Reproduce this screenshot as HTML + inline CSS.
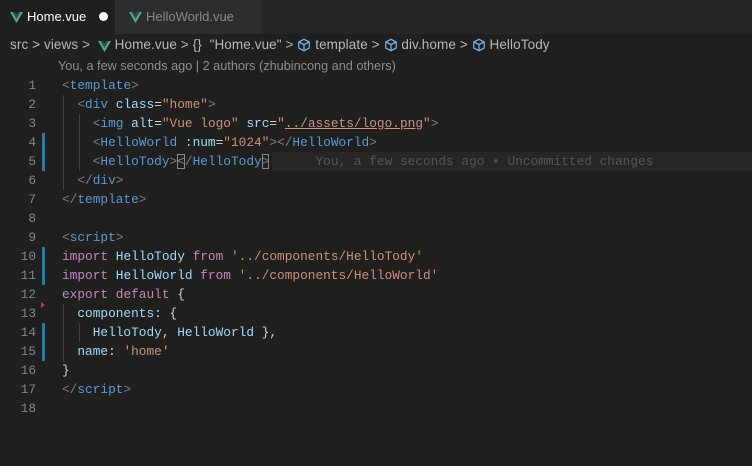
<!DOCTYPE html>
<html><head><meta charset="utf-8"><style>
body{margin:0;width:752px;height:466px;background:#1f1f1e;overflow:hidden;font-family:"Liberation Sans",sans-serif;position:relative}
.tabs{position:absolute;left:0;top:0;width:752px;height:34px;background:#252526}
.tab{position:absolute;top:0;height:34px;font-size:13px;line-height:34px}
.t1{left:0;width:115px;background:#1f1f1e;color:#fff}
.t2{left:115px;width:147px;background:#2d2d2d;color:#8a8a8a}
.t2 .v{margin-left:14px}
.v{display:inline-block;vertical-align:-2px;margin:0 4px 0 10px}
.bc{position:absolute;left:10px;top:36px;font-size:13.5px;letter-spacing:0.1px;color:#b8b8b8;line-height:18px;white-space:nowrap}
.bc svg{vertical-align:-3px}
.blame{position:absolute;left:58px;top:59px;font-size:12.7px;color:#8f8f8f}
.code{position:absolute;left:0;top:76px;font-family:"Liberation Mono",monospace;font-size:12.8px}
.ln{position:absolute;left:0;width:36px;text-align:right;color:#858585;height:19px;line-height:19px}
.l{position:absolute;left:62px;height:19px;line-height:19px;white-space:pre;color:#d4d4d4}
.g{position:absolute;left:42px;width:3px;height:19px;background:#1b81a8}
.b{color:#808080}.t{color:#569cd6}.a{color:#9cdcfe}.s{color:#ce9178}.k{color:#c586c0}.c{color:#9cdcfe}
.br{outline:1px solid #888;outline-offset:-1px}
.ghost{color:#555}
.guide{position:absolute;width:1px;background:#404040}
</style></head><body>
<div class="tabs">
<div class="tab t1"><svg class="v" width="13" height="11" viewBox="0 0 26 22"><path d="M0 0h5l8 14 8-14h5L13 22z" fill="#41b883"/><path d="M5 0h5l3 5 3-5h5l-8 14z" fill="#35495e"/></svg>Home.vue<span style="display:inline-block;width:9px;height:9px;border-radius:50%;background:#fff;margin-left:13px;vertical-align:0"></span></div>
<div class="tab t2"><svg class="v" width="13" height="11" viewBox="0 0 26 22"><path d="M0 0h5l8 14 8-14h5L13 22z" fill="#41b883"/><path d="M5 0h5l3 5 3-5h5l-8 14z" fill="#35495e"/></svg>HelloWorld.vue</div>
</div>
<div class="bc">src &gt; views &gt; &nbsp;<svg width="13" height="11" viewBox="0 0 26 22"><path d="M0 0h5l8 14 8-14h5L13 22z" fill="#41b883"/><path d="M5 0h5l3 5 3-5h5l-8 14z" fill="#35495e"/></svg> Home.vue &gt; {} &nbsp;"Home.vue" &gt; <svg width="14" height="14" viewBox="0 0 16 16"><path d="M8 1.5l6 3v7l-6 3-6-3v-7zM2 4.5l6 3 6-3M8 7.5v7" fill="none" stroke="#75beff" stroke-width="1.3"/></svg> template &gt; <svg width="14" height="14" viewBox="0 0 16 16"><path d="M8 1.5l6 3v7l-6 3-6-3v-7zM2 4.5l6 3 6-3M8 7.5v7" fill="none" stroke="#75beff" stroke-width="1.3"/></svg> div.home &gt; <svg width="14" height="14" viewBox="0 0 16 16"><path d="M8 1.5l6 3v7l-6 3-6-3v-7zM2 4.5l6 3 6-3M8 7.5v7" fill="none" stroke="#75beff" stroke-width="1.3"/></svg> HelloTody</div>
<div class="blame">You, a few seconds ago | 2 authors (zhubincong and others)</div>
<div class="code">
<div style="position:absolute;left:272px;top:76px;width:480px;height:19px;background:#262626"></div>
<div class="guide" style="left:63px;top:19px;height:95px"></div>
<div class="guide" style="left:79px;top:38px;height:57px"></div>
<div class="guide" style="left:63px;top:228px;height:57px"></div>
<div class="guide" style="left:79px;top:247px;height:19px"></div>
<div class="ln" style="top:0">1</div><div class="l" style="top:0"><span class="b">&lt;</span><span class="t">template</span><span class="b">&gt;</span></div>
<div class="ln" style="top:19px">2</div><div class="l" style="top:19px">  <span class="b">&lt;</span><span class="t">div</span> <span class="a">class</span>=<span class="s">"home"</span><span class="b">&gt;</span></div>
<div class="ln" style="top:38px">3</div><div class="l" style="top:38px">    <span class="b">&lt;</span><span class="t">img</span> <span class="a">alt</span>=<span class="s">"Vue logo"</span> <span class="a">src</span>=<span class="s">"<u>../assets/logo.png</u>"</span><span class="b">&gt;</span></div>
<div class="g" style="top:57px"></div><div class="ln" style="top:57px">4</div><div class="l" style="top:57px">    <span class="b">&lt;</span><span class="t">HelloWorld</span> <span class="a">:num</span>=<span class="s">"1024"</span><span class="b">&gt;&lt;/</span><span class="t">HelloWorld</span><span class="b">&gt;</span></div>
<div class="g" style="top:76px"></div><div class="ln" style="top:76px">5</div><div class="l" style="top:76px">    <span class="b">&lt;</span><span class="t">HelloTody</span><span class="b">&gt;</span><span class="b br">&lt;</span><span class="b">/</span><span class="t">HelloTody</span><span class="b br">&gt;</span>      <span class="ghost">You, a few seconds ago • Uncommitted changes</span></div>
<div class="ln" style="top:95px">6</div><div class="l" style="top:95px">  <span class="b">&lt;/</span><span class="t">div</span><span class="b">&gt;</span></div>
<div class="ln" style="top:114px">7</div><div class="l" style="top:114px"><span class="b">&lt;/</span><span class="t">template</span><span class="b">&gt;</span></div>
<div class="ln" style="top:133px">8</div>
<div class="ln" style="top:152px">9</div><div class="l" style="top:152px"><span class="b">&lt;</span><span class="t">script</span><span class="b">&gt;</span></div>
<div class="g" style="top:171px"></div><div class="ln" style="top:171px">10</div><div class="l" style="top:171px"><span class="k">import</span> <span class="c">HelloTody</span> <span class="k">from</span> <span class="s">'../components/HelloTody'</span></div>
<div class="g" style="top:190px"></div><div class="ln" style="top:190px">11</div><div class="l" style="top:190px"><span class="k">import</span> <span class="c">HelloWorld</span> <span class="k">from</span> <span class="s">'../components/HelloWorld'</span></div>
<div class="ln" style="top:209px">12</div><div class="l" style="top:209px"><span class="k">export</span> <span class="k">default</span> {</div>
<div style="position:absolute;left:41px;top:226px;width:0;height:0;border-left:4px solid #c33;border-top:3px solid transparent;border-bottom:3px solid transparent"></div>
<div class="ln" style="top:228px">13</div><div class="l" style="top:228px">  <span class="a">components</span>: {</div>
<div class="g" style="top:247px"></div><div class="ln" style="top:247px">14</div><div class="l" style="top:247px">    <span class="c">HelloTody</span>, <span class="c">HelloWorld</span> },</div>
<div class="g" style="top:266px"></div><div class="ln" style="top:266px">15</div><div class="l" style="top:266px">  <span class="a">name</span>: <span class="s">'home'</span></div>
<div class="ln" style="top:285px">16</div><div class="l" style="top:285px">}</div>
<div class="ln" style="top:304px">17</div><div class="l" style="top:304px"><span class="b">&lt;/</span><span class="t">script</span><span class="b">&gt;</span></div>
<div class="ln" style="top:323px">18</div>
</div>
</body></html>
